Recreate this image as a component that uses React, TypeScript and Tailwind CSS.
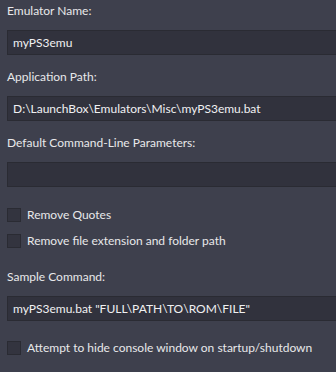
function Label({ children }: { children: string }) {
  return <div className="h-[22px] leading-[22px] px-[7px] text-[12px] text-[#e8e8ea]">{children}</div>;
}

function Field({ value }: { value?: string }) {
  return (
    <div className="ml-[7px] h-[25px] border border-r-0 border-[#2a2b33] bg-[#31323d] pl-[5px] text-[12px] leading-[23px] text-[#f0f0f2]">
      {value}
    </div>
  );
}

function Check({ label }: { label: string }) {
  return (
    <div className="flex h-[14px] items-center gap-[6px] px-[7px]">
      <div className="h-[14px] w-[14px] shrink-0 border border-[#2a2b33] bg-[#33343f]" />
      <span className="whitespace-nowrap text-[12px] leading-[14px] text-[#e8e8ea]">{label}</span>
    </div>
  );
}

export default function App() {
  return (
    <div
      className="h-[372px] w-[336px] overflow-hidden bg-[#3e404d]"
      style={{ fontFamily: 'Lato, "Noto Sans", sans-serif' }}
    >
      <Label>Emulator Name:</Label>
      <div className="mt-[8px]">
        <Field value="myPS3emu" />
      </div>
      <div className="mt-[11px]">
        <Label>Application Path:</Label>
      </div>
      <div className="mt-[8px]">
        <Field value="D:\LaunchBox\Emulators\Misc\myPS3emu.bat" />
      </div>
      <div className="mt-[11px]">
        <Label>Default Command-Line Parameters:</Label>
      </div>
      <div className="mt-[8px]">
        <Field />
      </div>
      <div className="mt-[21px]">
        <Check label="Remove Quotes" />
      </div>
      <div className="mt-[12px]">
        <Check label="Remove file extension and folder path" />
      </div>
      <div className="mt-[18px]">
        <Label>Sample Command:</Label>
      </div>
      <div className="mt-[8px]">
        <Field value={'myPS3emu.bat "FULL\\PATH\\TO\\ROM\\FILE"'} />
      </div>
      <div className="mt-[20px]">
        <Check label="Attempt to hide console window on startup/shutdown" />
      </div>
    </div>
  );
}
